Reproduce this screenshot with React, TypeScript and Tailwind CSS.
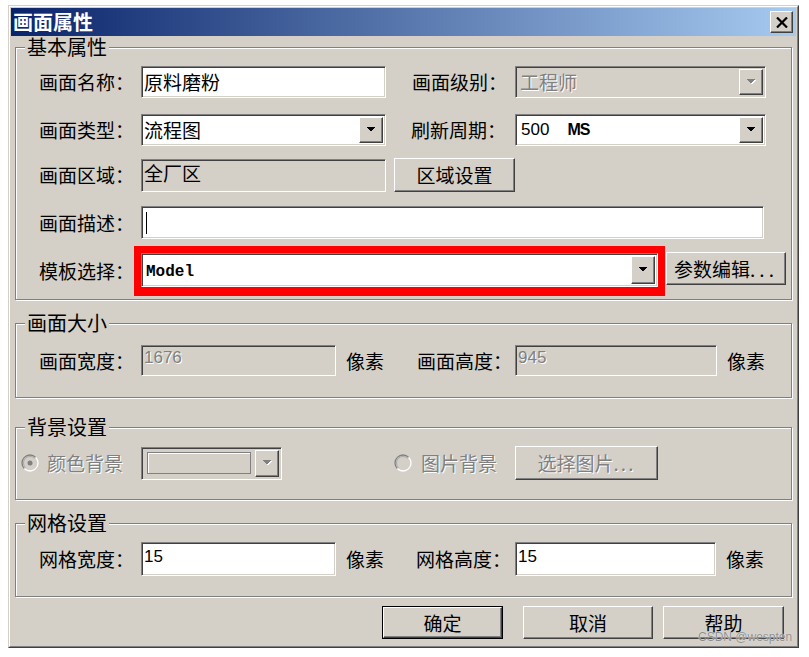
import React from "react";

const sunken =
  "border border-t-[#808080] border-l-[#808080] border-r-white border-b-white shadow-[inset_1px_1px_0_#404040,inset_-1px_-1px_0_#d4d0c8]";
const raised =
  "border border-t-white border-l-white border-r-[#404040] border-b-[#404040] shadow-[inset_-1px_-1px_0_#808080]";
const etched = "border border-[#808080] shadow-[inset_1px_1px_0_#fff,1px_1px_0_#fff]";
const disabledText = "text-[#808080] [text-shadow:1px_1px_0_#fff]";

function Arrow({ disabled }: { disabled?: boolean }) {
  return (
    <svg width="10" height="6" viewBox="0 0 10 6" shapeRendering="crispEdges">
      {disabled && <polygon points="1,1 10,1 5.5,5.5" fill="#fff" />}
      <polygon points="0,0 9,0 4.5,4.5" fill={disabled ? "#808080" : "#000"} />
    </svg>
  );
}

function DropBtn({ disabled }: { disabled?: boolean }) {
  return (
    <div className={`w-[24px] h-full shrink-0 flex items-center justify-center bg-[#d4d0c8] ${raised}`}>
      <Arrow disabled={disabled} />
    </div>
  );
}

function Combo({
  className,
  disabled,
  children,
}: {
  className: string;
  disabled?: boolean;
  children?: React.ReactNode;
}) {
  return (
    <div
      className={`${className} ${sunken} p-[2px] flex items-stretch ${
        disabled ? "bg-[#d4d0c8]" : "bg-white"
      }`}
    >
      <div className={`flex-1 flex items-center min-w-0 ${disabled ? disabledText : ""}`}>{children}</div>
      <DropBtn disabled={disabled} />
    </div>
  );
}

function Field({
  className,
  gray,
  disabled,
  children,
}: {
  className: string;
  gray?: boolean;
  disabled?: boolean;
  children?: React.ReactNode;
}) {
  return (
    <div
      className={`${className} ${sunken} flex items-center pl-[2px] ${gray ? "bg-[#d4d0c8]" : "bg-white"} ${
        disabled ? disabledText : ""
      }`}
    >
      {children}
    </div>
  );
}

function Label({ className, children }: { className: string; children: React.ReactNode }) {
  return <span className={`${className} shrink-0 text-[19px] leading-[24px] whitespace-nowrap`}>{children}</span>;
}

function Button({
  className,
  disabled,
  children,
}: {
  className: string;
  disabled?: boolean;
  children: React.ReactNode;
}) {
  return (
    <div
      className={`${className} ${raised} bg-[#d4d0c8] flex items-center justify-center text-[19px] leading-[20px] whitespace-nowrap ${
        disabled ? disabledText : ""
      }`}
    >
      {children}
    </div>
  );
}

function Group({
  title,
  className,
  children,
}: {
  title: string;
  className: string;
  children: React.ReactNode;
}) {
  return (
    <div className={`relative ml-[4px] w-[777px] ${etched} ${className}`}>
      <span className="absolute left-[9px] top-[-11px] px-[2px] bg-[#d4d0c8] text-[20px] leading-[20px]">
        {title}
      </span>
      {children}
    </div>
  );
}

function Radio({ checked }: { checked?: boolean }) {
  return (
    <svg width="18" height="18" viewBox="0 0 18 18" className="shrink-0">
      <circle cx="9" cy="9" r="7.5" fill="#d4d0c8" />
      <path d="M14.66 3.34 A8 8 0 0 0 3.34 14.66" stroke="#808080" strokeWidth="1.3" fill="none" />
      <path d="M3.34 14.66 A8 8 0 0 0 14.66 3.34" stroke="#ffffff" strokeWidth="1.3" fill="none" />
      <path d="M13.6 4.4 A6.5 6.5 0 0 0 4.4 13.6" stroke="#a8a8a8" strokeWidth="1" fill="none" />
      {checked && <circle cx="9" cy="9" r="2.5" fill="#808080" />}
    </svg>
  );
}

export default function App() {
  return (
    <div className="relative w-[809px] h-[657px] bg-white overflow-hidden font-['Noto_Sans_CJK_SC',sans-serif] text-black leading-[24px]">
      <div className="ml-[8px] mt-[5px] w-[791px] h-[643px] border border-t-[#d4d0c8] border-l-[#d4d0c8] border-r-[#404040] border-b-[#404040] bg-[#d4d0c8]">
        <div className="h-full border border-t-white border-l-white border-r-[#808080] border-b-[#808080] p-[1px] flex flex-col">
          {/* title bar */}
          <div className="h-[28px] shrink-0 bg-[linear-gradient(to_right,#0a246a,#a6caf0)] flex items-center justify-between">
            <span className="pl-[2px] text-white font-bold text-[20px] leading-[22px]">画面属性</span>
            <div className={`mr-[3px] w-[23px] h-[22px] ${raised} bg-[#d4d0c8] flex items-center justify-center`}>
              <svg width="12" height="11" viewBox="0 0 12 11">
                <path d="M1 0.5 L11 10.5 M11 0.5 L1 10.5" stroke="#000" strokeWidth="2.2" />
              </svg>
            </div>
          </div>

          {/* body */}
          <div className="flex-1 flex flex-col">
            <Group title="基本属性" className="mt-[11px] h-[253px] pt-[18px] pl-[23px]">
              <div className="flex items-center h-[32px]">
                <Label className="w-[102px]">画面名称：</Label>
                <Field className="w-[245px] h-full">
                  <span className="text-[19px]">原料磨粉</span>
                </Field>
                <Label className="w-[129px] pl-[26px]">画面级别：</Label>
                <Combo className="w-[251px] h-full" disabled>
                  <span className="pl-[2px] text-[19px]">工程师</span>
                </Combo>
              </div>

              <div className="flex items-center h-[32px] mt-[16px]">
                <Label className="w-[102px]">画面类型：</Label>
                <Combo className="w-[245px] h-full">
                  <span className="text-[19px]">流程图</span>
                </Combo>
                <Label className="w-[129px] pl-[25px]">刷新周期：</Label>
                <Combo className="w-[251px] h-full">
                  <span className="pl-[3px] font-['Liberation_Sans',sans-serif] text-[17px]">500</span>
                  <span className="ml-[18px] font-['Liberation_Sans',sans-serif] text-[16px] font-bold tracking-[-1px]">
                    MS
                  </span>
                </Combo>
              </div>

              <div className="flex items-center h-[34px] mt-[12px]">
                <Label className="w-[102px]">画面区域：</Label>
                <Field className="w-[245px] h-[33px]" gray>
                  <span className="text-[19px] -mt-[4px]">全厂区</span>
                </Field>
                <Button className="ml-[8px] w-[121px] h-[34px]">区域设置</Button>
              </div>

              <div className="flex items-center h-[33px] mt-[14px]">
                <Label className="w-[102px]">画面描述：</Label>
                <Field className="w-[623px] h-full">
                  <span className="ml-[2px] w-[1px] h-[22px] bg-black" />
                </Field>
              </div>

              <div className="flex items-start h-[50px] mt-[7px]">
                <Label className="w-[95px] self-center">模板选择：</Label>
                <div className="w-[531px] h-[50px] border-[7px] border-b-[9px] border-[#ff0000]">
                  <Combo className="w-full h-full">
                    <span className="pl-[2px] mt-[3px] font-['Liberation_Mono',monospace] font-bold text-[16px]">
                      Model
                    </span>
                  </Combo>
                </div>
                <Button className="ml-[1px] mt-[6px] w-[120px] h-[33px]">
                  参数编辑<span className="tracking-[4px]">...</span>
                </Button>
              </div>
            </Group>

            <Group title="画面大小" className="mt-[23px] h-[75px] pt-[21px] pl-[23px]">
              <div className="flex items-center h-[31px]">
                <Label className="w-[102px]">画面宽度：</Label>
                <Field className="w-[195px] h-full" gray disabled>
                  <span className="font-['Liberation_Sans',sans-serif] text-[17px] -mt-[6px]">1676</span>
                </Field>
                <Label className="ml-[10px] w-[71px]">像素</Label>
                <Label className="w-[98px]">画面高度：</Label>
                <Field className="w-[202px] h-full" gray disabled>
                  <span className="font-['Liberation_Sans',sans-serif] text-[17px] -mt-[6px]">945</span>
                </Field>
                <Label className="ml-[10px] w-[40px]">像素</Label>
              </div>
            </Group>

            <Group title="背景设置" className="mt-[29px] h-[73px] pt-[18px] pl-[5px]">
              <div className="flex items-center h-[34px]">
                <div className="w-[120px] flex items-center">
                  <Radio checked />
                  <span className={`ml-[8px] text-[19px] ${disabledText}`}>颜色背景</span>
                </div>
                <Combo className="w-[141px] h-[33px]" disabled>
                  <div className="ml-[3px] w-[104px] h-[22px] border border-[#808080] shadow-[inset_1px_1px_0_#fff]" />
                </Combo>
                <div className="ml-[112px] w-[121px] flex items-center">
                  <Radio />
                  <span className={`ml-[9px] text-[19px] ${disabledText}`}>图片背景</span>
                </div>
                <Button className="w-[143px] h-[34px]" disabled>
                  选择图片<span className="tracking-[2px]">...</span>
                </Button>
              </div>
            </Group>

            <Group title="网格设置" className="mt-[23px] h-[74px] pt-[18px] pl-[23px]">
              <div className="flex items-center h-[34px]">
                <Label className="w-[102px]">网格宽度：</Label>
                <Field className="w-[195px] h-full">
                  <span className="font-['Liberation_Sans',sans-serif] text-[17px] -mt-[4px]">15</span>
                </Field>
                <Label className="ml-[10px] w-[70px]">像素</Label>
                <Label className="w-[99px]">网格高度：</Label>
                <Field className="w-[201px] h-full">
                  <span className="font-['Liberation_Sans',sans-serif] text-[17px] -mt-[4px]">15</span>
                </Field>
                <Label className="ml-[10px] w-[40px]">像素</Label>
              </div>
            </Group>

            <div className="flex mt-[9px] pl-[371px]">
              <div className="w-[121px] h-[33px] border border-black">
                <Button className="w-full h-full">确定</Button>
              </div>
              <Button className="ml-[20px] w-[130px] h-[33px]">取消</Button>
              <Button className="ml-[10px] w-[121px] h-[33px]">帮助</Button>
            </div>
          </div>
        </div>
      </div>
      <span className="absolute left-[698px] top-[631px] font-['Liberation_Sans',sans-serif] text-[12px] leading-[13px] text-[#8c8c8c] [text-shadow:0_0_1px_#fff]">
        CSDN @wespten
      </span>
    </div>
  );
}
